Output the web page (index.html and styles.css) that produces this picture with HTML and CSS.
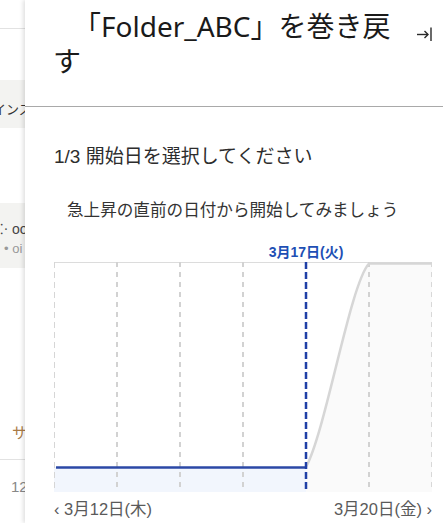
FILE: index.html
```html
<!DOCTYPE html>
<html lang="ja">
<head>
<meta charset="utf-8">
<title>Folder_ABC を巻き戻す</title>
<link rel="stylesheet" href="styles.css">
</head>
<body>
<div class="bg-page">
  <div class="bg-top"></div>
  <div class="bg-band bg-band-1"><span class="bg-clip">インストール</span></div>
  <div class="bg-band bg-band-2">
    <div class="bg-line1">⁘ oo</div>
    <div class="bg-line2">• oi</div>
  </div>
  <div class="bg-sa">サ</div>
  <div class="bg-num">12</div>
</div>

<aside class="drawer">
  <header class="drawer-head">
    <h1 class="drawer-title">「Folder_ABC」を巻き戻す</h1>
    <button class="close-btn" aria-label="閉じる">
      <svg width="17" height="16" viewBox="0 0 17 16" fill="none" stroke="#2a2a2a" stroke-width="1.4">
        <path d="M1 8.5H12"/>
        <path d="M8.5 5L12 8.5L8.5 12"/>
        <path d="M15 1.5V15"/>
      </svg>
    </button>
  </header>
  <section class="drawer-body">
    <h2 class="step">1/3 開始日を選択してください</h2>
    <p class="hint">急上昇の直前の日付から開始してみましょう</p>
    <div class="chart">
      <div class="marker-row"><span class="marker-label" style="left:252px">3月17日(火)</span></div>
      <svg class="chart-svg" width="378" height="230" viewBox="0 0 378 230">
        <path d="M252 205 C272 168 296 22 315 1 L378 1 L378 230 L252 230 Z" fill="#fafafa"/>
        <rect x="0" y="205" width="252" height="25" fill="#f2f6fd"/>
        <line x1="0" y1="0.5" x2="378" y2="0.5" stroke="#dcdcdc" stroke-width="1"/>
        <line x1="0.5" y1="0" x2="0.5" y2="230" stroke="#d6d6d6" stroke-width="1" stroke-dasharray="6 4"/>
        <g stroke="#d2d2d2" stroke-width="2" stroke-dasharray="5 5">
          <line x1="63" y1="0" x2="63" y2="230"/>
          <line x1="126" y1="0" x2="126" y2="230"/>
          <line x1="189" y1="0" x2="189" y2="230"/>
          <line x1="315" y1="0" x2="315" y2="230"/>
        </g>
        <line x1="377.5" y1="0" x2="377.5" y2="230" stroke="#d8d8d8" stroke-width="1" stroke-dasharray="5 5"/>
        <path d="M252 205 C272 168 296 22 315 1.5 L378 1.5" fill="none" stroke="#d6d6d6" stroke-width="2.5"/>
        <line x1="2" y1="205.5" x2="252" y2="205.5" stroke="#2b48a6" stroke-width="2.5"/>
        <line x1="252" y1="0" x2="252" y2="230" stroke="#1f3fa6" stroke-width="2.5" stroke-dasharray="7 3"/>
      </svg>
      <div class="axis">
        <span class="axis-left">‹ 3月12日(木)</span>
        <span class="axis-right">3月20日(金) ›</span>
      </div>
    </div>
  </section>
</aside>
</body>
</html>
```
FILE: styles.css
```css
html, body {
  margin: 0;
  padding: 0;
  height: 100%;
  overflow: hidden;
}
body {
  font-family: "Liberation Sans", "Noto Sans CJK JP", sans-serif;
  color: #333;
  background: #fff;
  position: relative;
}

/* background page (mostly hidden behind drawer) */
.bg-page {
  display: flex;
  flex-direction: column;
  width: 100%;
}
.bg-top {
  height: 28px;
  border-bottom: 1px solid #e2e2e2;
}
.bg-band {
  background: #f3f3f1;
  overflow: hidden;
  white-space: nowrap;
}
.bg-band-1 {
  margin-top: 51px;
  height: 48px;
  display: flex;
  align-items: center;
}
.bg-clip {
  margin-left: -7px;
  font-size: 13px;
  color: #333;
  padding-top: 8px;
}
.bg-band-2 {
  margin-top: 75px;
  height: 65px;
  padding-top: 16px;
  box-sizing: border-box;
}
.bg-line1 {
  margin-left: -4px;
  font-size: 14px;
  color: #444;
  line-height: 20px;
}
.bg-line2 {
  margin-left: 4px;
  font-size: 13px;
  color: #999;
  line-height: 20px;
}
.bg-sa {
  margin-top: 155px;
  padding-left: 12px;
  font-size: 15px;
  color: #a97a46;
  line-height: 20px;
  height: 36px;
  border-bottom: 1px solid #e2e2e2;
}
.bg-num {
  margin-top: 17px;
  padding-left: 11px;
  font-size: 15px;
  color: #888;
  line-height: 20px;
}

/* drawer */
.drawer {
  position: absolute;
  top: 0;
  left: 25px;
  right: 0;
  bottom: 0;
  background: #fff;
  box-shadow: -2px 0 4px rgba(0, 0, 0, 0.12);
  display: flex;
  flex-direction: column;
}
.drawer-head {
  display: flex;
  align-items: flex-start;
  justify-content: space-between;
  padding: 9px 10px 0 28px;
  height: 107px;
  box-sizing: border-box;
  border-bottom: 1px solid #a9a9a9;
}
.drawer-title {
  margin: 0;
  width: 352px;
  font-family: "Noto Sans", "Noto Sans CJK JP", sans-serif;
  font-weight: 400;
  font-size: 28px;
  line-height: 35px;
  color: #1a1a1a;
  text-indent: 20px;
}
.close-btn {
  margin-top: 17px;
  padding: 0;
  border: 0;
  background: none;
  width: 17px;
  height: 16px;
  display: flex;
}

.drawer-body {
  padding: 37px 11px 0 29px;
}
.step {
  margin: 0;
  font-size: 19px;
  font-weight: 400;
  line-height: 25px;
  color: #2d2d2d;
}
.hint {
  margin: 31px 0 0 13px;
  font-size: 16.6px;
  line-height: 22px;
  color: #333;
}
.chart {
  margin-top: 16px;
  width: 378px;
}
.marker-row {
  position: relative;
  height: 24px;
}
.marker-label {
  position: absolute;
  bottom: 2px;
  transform: translateX(-50%);
  font-size: 14px;
  font-weight: 700;
  color: #1e4fb5;
  white-space: nowrap;
  line-height: 16px;
}
.chart-svg {
  display: block;
}
.axis {
  display: flex;
  justify-content: space-between;
  margin-top: 7px;
  font-size: 16.5px;
  color: #5a5a5a;
  line-height: 20px;
}
```
